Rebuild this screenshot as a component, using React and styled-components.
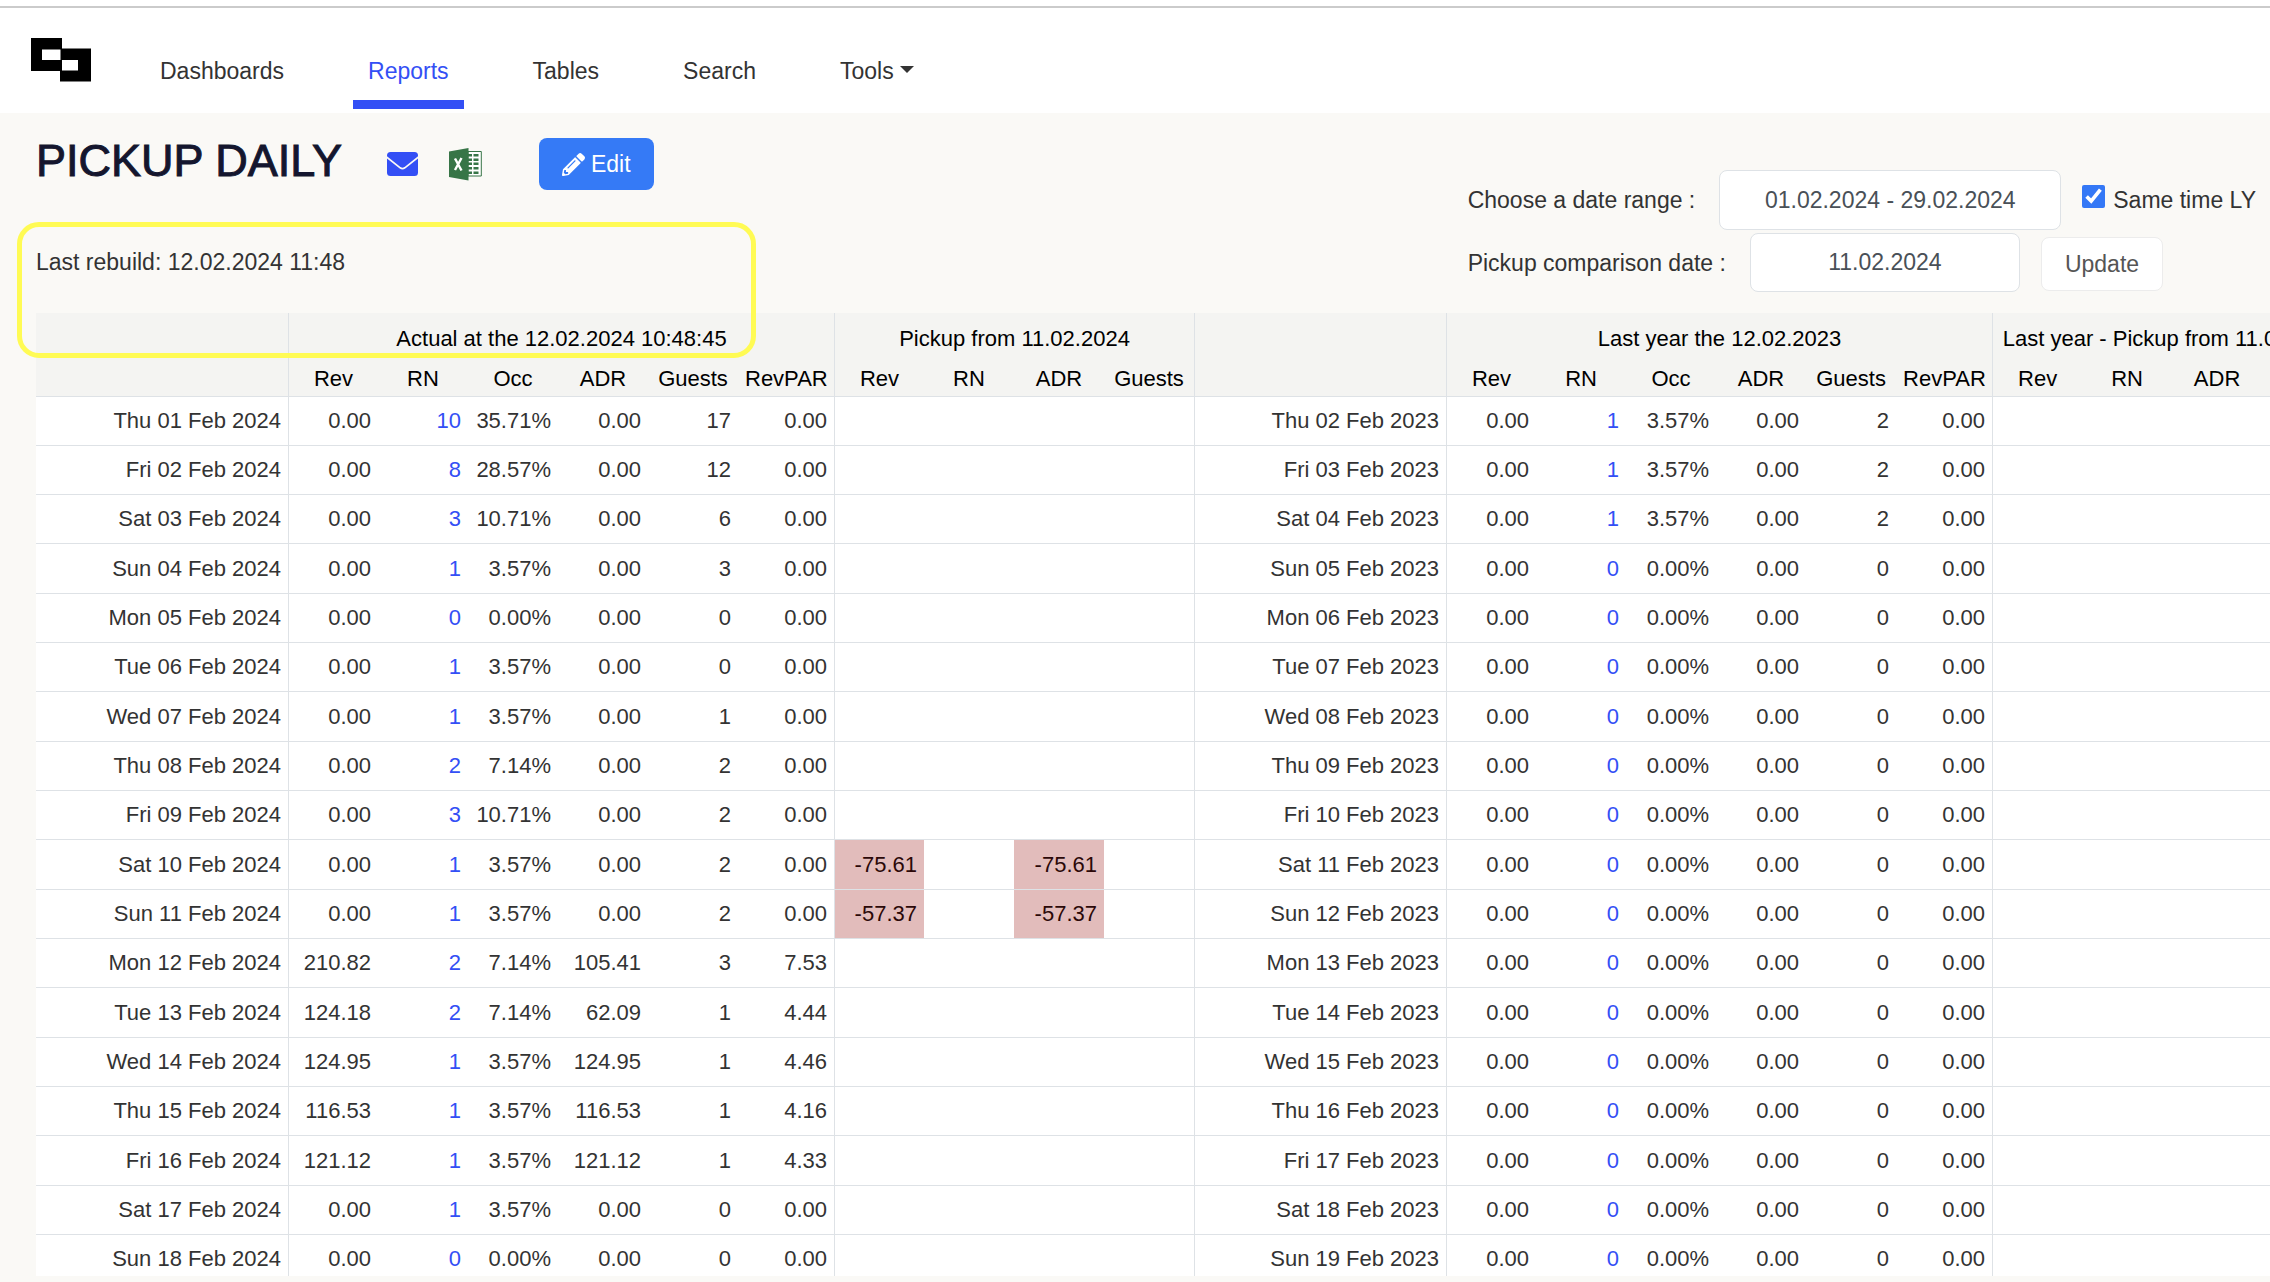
import React from "react";
import styled, { createGlobalStyle } from "styled-components";
import { FaPencilAlt } from "react-icons/fa";

const columns = ["Rev", "RN", "Occ", "ADR", "Guests", "RevPAR"];
const pickupColumns = ["Rev", "RN", "ADR", "Guests"];

const columnWidths = [89, 90, 90, 90, 90, 97];
const pickupWidths = [89, 90, 90, 91];

const rows = [
  ["Thu 01 Feb 2024", "0.00", "10", "35.71%", "0.00", "17", "0.00", "", "Thu 02 Feb 2023", "1", "3.57%", "2"],
  ["Fri 02 Feb 2024", "0.00", "8", "28.57%", "0.00", "12", "0.00", "", "Fri 03 Feb 2023", "1", "3.57%", "2"],
  ["Sat 03 Feb 2024", "0.00", "3", "10.71%", "0.00", "6", "0.00", "", "Sat 04 Feb 2023", "1", "3.57%", "2"],
  ["Sun 04 Feb 2024", "0.00", "1", "3.57%", "0.00", "3", "0.00", "", "Sun 05 Feb 2023", "0", "0.00%", "0"],
  ["Mon 05 Feb 2024", "0.00", "0", "0.00%", "0.00", "0", "0.00", "", "Mon 06 Feb 2023", "0", "0.00%", "0"],
  ["Tue 06 Feb 2024", "0.00", "1", "3.57%", "0.00", "0", "0.00", "", "Tue 07 Feb 2023", "0", "0.00%", "0"],
  ["Wed 07 Feb 2024", "0.00", "1", "3.57%", "0.00", "1", "0.00", "", "Wed 08 Feb 2023", "0", "0.00%", "0"],
  ["Thu 08 Feb 2024", "0.00", "2", "7.14%", "0.00", "2", "0.00", "", "Thu 09 Feb 2023", "0", "0.00%", "0"],
  ["Fri 09 Feb 2024", "0.00", "3", "10.71%", "0.00", "2", "0.00", "", "Fri 10 Feb 2023", "0", "0.00%", "0"],
  ["Sat 10 Feb 2024", "0.00", "1", "3.57%", "0.00", "2", "0.00", "-75.61", "Sat 11 Feb 2023", "0", "0.00%", "0"],
  ["Sun 11 Feb 2024", "0.00", "1", "3.57%", "0.00", "2", "0.00", "-57.37", "Sun 12 Feb 2023", "0", "0.00%", "0"],
  ["Mon 12 Feb 2024", "210.82", "2", "7.14%", "105.41", "3", "7.53", "", "Mon 13 Feb 2023", "0", "0.00%", "0"],
  ["Tue 13 Feb 2024", "124.18", "2", "7.14%", "62.09", "1", "4.44", "", "Tue 14 Feb 2023", "0", "0.00%", "0"],
  ["Wed 14 Feb 2024", "124.95", "1", "3.57%", "124.95", "1", "4.46", "", "Wed 15 Feb 2023", "0", "0.00%", "0"],
  ["Thu 15 Feb 2024", "116.53", "1", "3.57%", "116.53", "1", "4.16", "", "Thu 16 Feb 2023", "0", "0.00%", "0"],
  ["Fri 16 Feb 2024", "121.12", "1", "3.57%", "121.12", "1", "4.33", "", "Fri 17 Feb 2023", "0", "0.00%", "0"],
  ["Sat 17 Feb 2024", "0.00", "1", "3.57%", "0.00", "0", "0.00", "", "Sat 18 Feb 2023", "0", "0.00%", "0"],
  ["Sun 18 Feb 2024", "0.00", "0", "0.00%", "0.00", "0", "0.00", "", "Sun 19 Feb 2023", "0", "0.00%", "0"],
];

const MailIcon = () => (
  <svg width="31" height="24" viewBox="0 0 31 24" aria-hidden="true">
    <rect width="31" height="24" rx="3.5" fill="#334ff5" />
    <path
      d="M-1 4.500 13.200 15.800q2.300 1.700 4.600 0L32 4.500"
      fill="none"
      stroke="#faf9f6"
      strokeWidth="1.700"
    />
  </svg>
);

const ExcelIcon = () => (
  <svg width="33" height="33" viewBox="0 0 33 33" aria-hidden="true">
    <path d="M19 3.500h13.300v24.500H19z" fill="#fff" stroke="#377547" strokeWidth="1" />
    <path
      d="M19 6h4v2.500h-4zM24.500 6h5v2.500h-5zM19 10.500h4v2.500h-4zM24.500 10.500h5v2.500h-5zM19 14.500h4v2.500h-4zM24.500 14.500h5v2.500h-5zM19 19h4v2.500h-4zM24.500 19h5v2.500h-5zM19 23.500h4v2.500h-4zM24.500 23.500h5v2.500h-5z"
      fill="#377547"
    />
    <path d="M0 3.500 19.500 0v32.500L0 29z" fill="#377547" />
    <path d="M6 10.500l6.500 12M12.500 10 6 22" stroke="#fff" strokeWidth="2.400" />
  </svg>
);

const Logo = () => (
  <svg width="60" height="44" viewBox="0 0 60 44" aria-hidden="true">
    <path
      fillRule="evenodd"
      d="M0 0h31v10.500h29v33H29V33H0zM11 11.500v10.500h18.500V11.500zM31 22v10.500h16V22z"
      fill="#000"
    />
  </svg>
);

const App = () => {
  return (
    <Page>
      <GlobalStyle />
      <Header>
        <Brand href="#home" aria-label="Home">
          <Logo />
        </Brand>
        <Nav>
          <NavLink href="#dashboards">Dashboards</NavLink>
          <NavLink href="#reports" $active>
            Reports
          </NavLink>
          <NavLink href="#tables">Tables</NavLink>
          <NavLink href="#search">Search</NavLink>
          <NavLink href="#tools">
            Tools
            <Caret />
          </NavLink>
        </Nav>
      </Header>

      <Toolbar>
        <TitleBlock>
          <TitleRow>
            <Title>PICKUP DAILY</Title>
            <IconButton type="button" aria-label="Send by e-mail">
              <MailIcon />
            </IconButton>
            <IconButton type="button" aria-label="Export to Excel">
              <ExcelIcon />
            </IconButton>
            <EditButton type="button">
              <FaPencilAlt size={23} />
              Edit
            </EditButton>
          </TitleRow>
          <Rebuild>
            Last rebuild: 12.02.2024 11:48
            <Highlight />
          </Rebuild>
        </TitleBlock>
        <Filters>
          <FilterRow>
            <label htmlFor="range">Choose a date range :</label>
            <DateInput id="range" $width={342} $height={60} defaultValue="01.02.2024 - 29.02.2024" />
            <CheckLabel>
              <Checkbox type="checkbox" defaultChecked />
              Same time LY
            </CheckLabel>
          </FilterRow>
          <FilterRow>
            <label htmlFor="comparison">Pickup comparison date :</label>
            <DateInput id="comparison" $width={270} $height={59} defaultValue="11.02.2024" />
            <UpdateButton type="button">Update</UpdateButton>
          </FilterRow>
        </Filters>
      </Toolbar>

      <TableWrap>
        <Table>
          <colgroup>
            <Col $width={253} />
            {columnWidths.map((width, i) => (
              <Col key={i} $width={width} />
            ))}
            {pickupWidths.map((width, i) => (
              <Col key={i} $width={width} />
            ))}
            <Col $width={252} />
            {columnWidths.map((width, i) => (
              <Col key={i} $width={width} />
            ))}
            {pickupWidths.map((width, i) => (
              <Col key={i} $width={width} />
            ))}
          </colgroup>
          <thead>
            <tr>
              <GroupHead $last />
              <GroupHead colSpan={6} $last>
                Actual at the 12.02.2024 10:48:45
              </GroupHead>
              <GroupHead colSpan={4} $last>
                Pickup from 11.02.2024
              </GroupHead>
              <GroupHead $last />
              <GroupHead colSpan={6} $last>
                Last year the 12.02.2023
              </GroupHead>
              <GroupHead colSpan={4}>Last year - Pickup from 11.02.2023</GroupHead>
            </tr>
            <tr>
              <ColumnHead $last />
              {columns.map((c) => (
                <ColumnHead key={c} $last={c === "RevPAR"}>
                  {c}
                </ColumnHead>
              ))}
              {pickupColumns.map((c) => (
                <ColumnHead key={c} $last={c === "Guests"}>
                  {c}
                </ColumnHead>
              ))}
              <ColumnHead $last />
              {columns.map((c) => (
                <ColumnHead key={c} $last={c === "RevPAR"}>
                  {c}
                </ColumnHead>
              ))}
              {pickupColumns.map((c) => (
                <ColumnHead key={c}>{c}</ColumnHead>
              ))}
            </tr>
          </thead>
          <tbody>
            {rows.map(([date, rev, rn, occ, adr, guests, revpar, pickup, lyDate, lyRn, lyOcc, lyGuests]) => (
              <Row key={date}>
                <DateCell scope="row">{date}</DateCell>
                <Cell>{rev}</Cell>
                <Cell>
                  <RnLink href="#rn">{rn}</RnLink>
                </Cell>
                <Cell>{occ}</Cell>
                <Cell>{adr}</Cell>
                <Cell>{guests}</Cell>
                <Cell $last>{revpar}</Cell>
                <Cell $negative={pickup !== ""}>{pickup}</Cell>
                <Cell />
                <Cell $negative={pickup !== ""}>{pickup}</Cell>
                <Cell $last />
                <DateCell>{lyDate}</DateCell>
                <Cell>0.00</Cell>
                <Cell>
                  <RnLink href="#rn">{lyRn}</RnLink>
                </Cell>
                <Cell>{lyOcc}</Cell>
                <Cell>0.00</Cell>
                <Cell>{lyGuests}</Cell>
                <Cell $last>0.00</Cell>
                <Cell />
                <Cell />
                <Cell />
                <Cell />
              </Row>
            ))}
          </tbody>
        </Table>
      </TableWrap>
    </Page>
  );
};

const GlobalStyle = createGlobalStyle`
  * {
    box-sizing: border-box;
  }
  body {
    margin: 0;
    background-color: #faf9f6;
    color: #333333;
    font-family: "Liberation Sans", Arial, sans-serif;
    font-size: 23px;
    line-height: 36px;
  }
  button, input {
    font: inherit;
  }
`;

const Page = styled.div`
  display: flex;
  flex-direction: column;
  height: 100vh;
  padding-bottom: 6px;
  overflow: hidden;
`;

const Header = styled.header`
  display: flex;
  flex-shrink: 0;
  align-items: flex-start;
  height: 107px;
  margin-top: 6px;
  padding-left: 31px;
  border-top: 2px solid #cbcbcb;
  background-color: #ffffff;
  box-shadow: 0 -6px 0 #ffffff;
`;

const Brand = styled.a`
  display: flex;
  padding-top: 30px;
  margin-right: 54px;
`;

const Nav = styled.nav`
  display: flex;
  gap: 54px;
  padding-top: 45px;
`;

const NavLink = styled.a`
  display: flex;
  align-items: center;
  height: 56px;
  padding: 0 15px 11px;
  border-bottom: 9px solid ${(props) => (props.$active ? "#334ff5" : "transparent")};
  color: ${(props) => (props.$active ? "#334ff5" : "#333333")};
  text-decoration: none;
`;

const Caret = styled.span`
  margin-left: 6px;
  margin-bottom: 4px;
  border-top: 7px solid #333333;
  border-left: 7px solid transparent;
  border-right: 7px solid transparent;
`;

const Toolbar = styled.div`
  display: flex;
  flex-shrink: 0;
  justify-content: space-between;
  height: 200px;
  padding: 0 14px 0 36px;
`;

const TitleBlock = styled.div`
  padding-top: 19px;
`;

const TitleRow = styled.div`
  display: flex;
  align-items: center;
  height: 64px;
`;

const Title = styled.h1`
  margin: 0 45px 6px 0;
  color: #14162e;
  font-size: 45px;
  line-height: 54px;
  font-weight: 500;
  -webkit-text-stroke: 1px #14162e;
`;

const IconButton = styled.button`
  display: flex;
  margin-right: 31px;
  padding: 0;
  border: none;
  background: none;
  cursor: pointer;
`;

const EditButton = styled.button`
  display: flex;
  align-items: center;
  gap: 6px;
  height: 52px;
  margin-left: 26px;
  padding: 0 23px;
  border: none;
  border-radius: 8px;
  background-color: #357af6;
  color: #ffffff;
  cursor: pointer;
`;

const Rebuild = styled.div`
  position: relative;
  margin-top: 48px;
`;

/* marker drawn over the text and the top of the table */
const Highlight = styled.div`
  position: absolute;
  top: -22px;
  left: -19px;
  z-index: 1;
  width: 739px;
  height: 136px;
  border: 5px solid #fffb54;
  border-radius: 22px;
  pointer-events: none;
`;

const Filters = styled.div`
  display: flex;
  flex-direction: column;
  gap: 3px;
  padding-top: 57px;
`;

const FilterRow = styled.div`
  display: flex;
  align-items: center;
`;

const DateInput = styled.input`
  width: ${(props) => props.$width}px;
  height: ${(props) => props.$height}px;
  margin: 0 21px 0 24px;
  border: 1px solid #dee2e6;
  border-radius: 8px;
  background-color: #ffffff;
  color: #495057;
  text-align: center;
`;

const CheckLabel = styled.label`
  display: flex;
  align-items: center;
  gap: 8px;
`;

const Checkbox = styled.input`
  width: 23px;
  height: 23px;
  margin: 0 0 8px;
  accent-color: #3478f6;
`;

const UpdateButton = styled.button`
  height: 54px;
  margin-top: 2px;
  padding: 0 23px;
  border: 1px solid #ececec;
  border-radius: 8px;
  background-color: #ffffff;
  color: #555555;
  cursor: pointer;
`;

const TableWrap = styled.div`
  flex: 1;
  min-height: 0;
  margin-left: 36px;
  overflow: hidden;
`;

const Table = styled.table`
  table-layout: fixed;
  width: 2317px;
  border-collapse: separate;
  border-spacing: 0;
  background-color: #ffffff;
  font-size: 22px;
  line-height: 32px;
`;

const Col = styled.col`
  width: ${(props) => props.$width}px;
`;

const GroupHead = styled.th`
  height: 45px;
  padding: 6px 7px 0;
  border-right: ${(props) => (props.$last ? "1px solid #dee2e6" : "none")};
  background-color: #f4f4f2;
  color: #000000;
  font-weight: 500;
  white-space: nowrap;
`;

const ColumnHead = styled.th`
  height: 39px;
  padding: 4px 7px 0;
  border-right: ${(props) => (props.$last ? "1px solid #dee2e6" : "none")};
  border-bottom: 1px solid #dee2e6;
  background-color: #f4f4f2;
  color: #000000;
  font-weight: 500;
`;

const Row = styled.tr`
  height: 49px;
  &:nth-child(3n + 4) {
    height: 50px;
  }
`;

const Cell = styled.td`
  padding: 0 7px;
  border-right: ${(props) => (props.$last ? "1px solid #dee2e6" : "none")};
  border-bottom: 1px solid #dee2e6;
  background-color: ${(props) => (props.$negative ? "#e2bcbb" : "transparent")};
  color: ${(props) => (props.$negative ? "#2b0808" : "#333333")};
  text-align: right;
`;

const DateCell = styled.th`
  padding: 0 7px;
  border-right: 1px solid #dee2e6;
  border-bottom: 1px solid #dee2e6;
  font-weight: 400;
  text-align: right;
`;

const RnLink = styled.a`
  color: #334ff5;
  text-decoration: none;
`;

export default App;
